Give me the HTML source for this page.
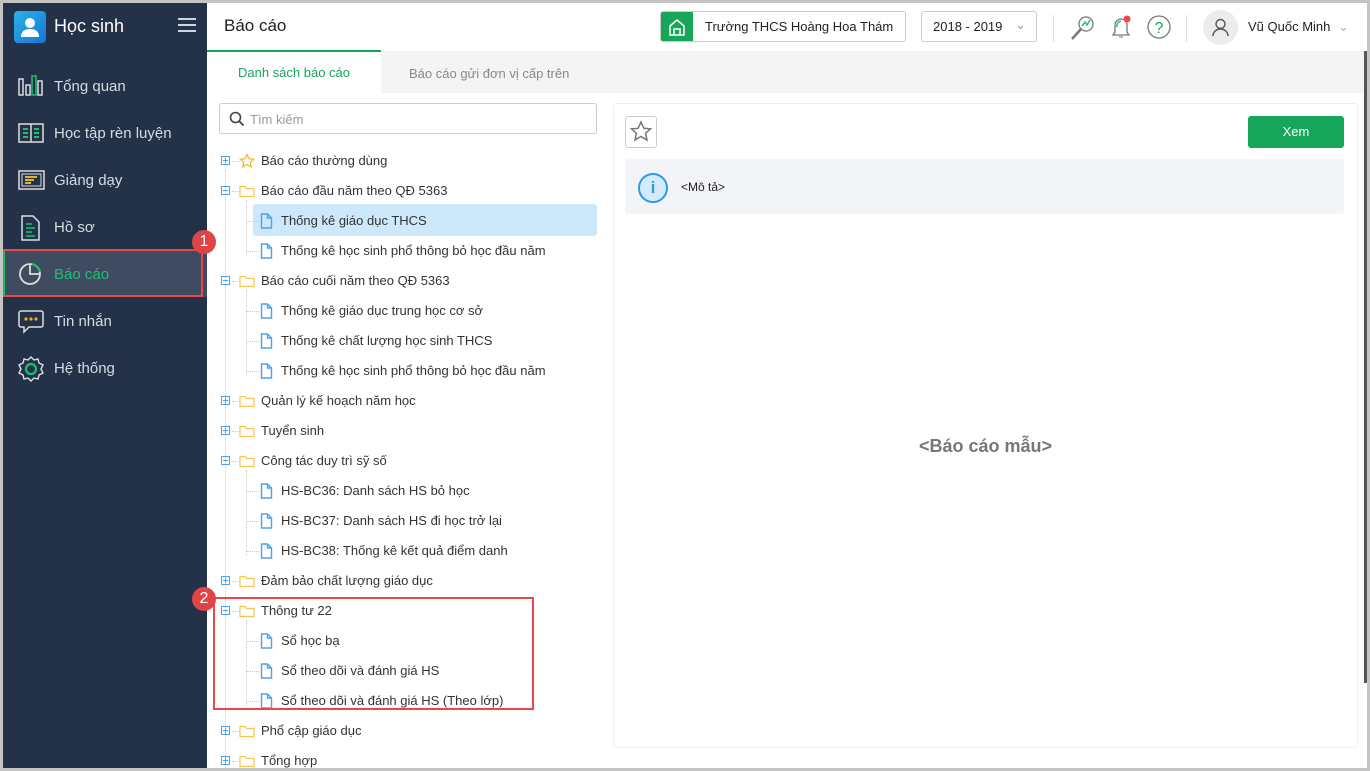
<!DOCTYPE html>
<html><head><meta charset="utf-8"><style>
*{box-sizing:border-box;margin:0;padding:0}
body{width:1370px;height:771px;overflow:hidden;background:#c4c4c4;font-family:"Liberation Sans",sans-serif;position:relative}
.a{position:absolute}
#app{left:3px;top:3px;width:1364px;height:765px;background:#fff;overflow:hidden}
#sb{left:0;top:0;width:204px;height:765px;background:#243249}
.nav{position:absolute;left:0;width:204px;height:47px;color:#d6dbe3;font-size:15px;line-height:49px;padding-left:51px}
.nav svg{position:absolute;left:14px;top:11px}
.tr{position:absolute;height:30px;line-height:30px;font-size:13px;color:#333;white-space:nowrap}
.exp{position:absolute;width:9px;height:9px;border:1px solid #4aa3f0;left:218px}
.exp:before{content:"";position:absolute;left:1px;top:3px;width:5px;height:1px;background:#4aa3f0}
.exp.p:after{content:"";position:absolute;left:3px;top:1px;width:1px;height:5px;background:#4aa3f0}
</style></head><body>
<div id="app" class="a">
<div id="sb" class="a">
 <div class="a" style="left:11px;top:8px;width:32px;height:32px;border-radius:4px;background:linear-gradient(135deg,#2bb0e8,#1477d6)"><svg width="32" height="32"><circle cx="16" cy="12" r="5" fill="#fff"/><path d="M7 26c0-6 4-8 9-8s9 2 9 8z" fill="#fff"/></svg></div>
 <div class="a" style="left:51px;top:13px;color:#fff;font-size:18px">Học sinh</div>
 <div class="a" style="left:175px;top:15px;width:18px;height:2px;background:#cfd5de;box-shadow:0 6px 0 #cfd5de,0 12px 0 #cfd5de"></div>
 <div class="nav" style="top:59px"><svg width="26" height="26"><rect x="2" y="6" width="4" height="16" fill="none" stroke="#ddd" stroke-width="1.5"/><rect x="9" y="12" width="4" height="10" fill="none" stroke="#ddd" stroke-width="1.5"/><rect x="15" y="3" width="4" height="19" fill="none" stroke="#1ec070" stroke-width="1.5"/><rect x="21" y="8" width="4" height="14" fill="none" stroke="#ddd" stroke-width="1.5"/></svg>Tổng quan</div>
 <div class="nav" style="top:106px"><svg width="28" height="26"><rect x="2" y="4" width="24" height="18" fill="none" stroke="#ddd" stroke-width="1.5"/><line x1="14" y1="4" x2="14" y2="22" stroke="#ddd" stroke-width="1.5"/><path d="M6 9h5M6 13h5M6 17h5M17 9h5M17 13h5M17 17h5" stroke="#1ec070" stroke-width="2"/></svg>Học tập rèn luyện</div>
 <div class="nav" style="top:153px"><svg width="28" height="26"><rect x="2" y="4" width="25" height="18" fill="none" stroke="#ddd" stroke-width="1.5"/><rect x="5" y="7" width="19" height="12" fill="none" stroke="#ddd"/><path d="M8 10h12M8 13h9M8 16h6" stroke="#e6b422" stroke-width="2"/></svg>Giảng dạy</div>
 <div class="nav" style="top:200px"><svg width="26" height="28"><path d="M5 2h11l6 6v18H5z" fill="none" stroke="#ddd" stroke-width="1.5"/><path d="M9 10h6M9 14h9M9 18h6M9 22h9" stroke="#1ec070" stroke-width="1.5"/></svg>Hồ sơ</div>
 <div class="nav" style="top:247px;background:#3e4b60;color:#1ec070;border-left:2px solid #1ec070;padding-left:49px"><svg width="26" height="26" style="left:12px"><circle cx="13" cy="13" r="10" fill="none" stroke="#ddd" stroke-width="1.8"/><path d="M13 3v10h10" fill="none" stroke="#ddd" stroke-width="1.8"/><path d="M15 3a10 10 0 0 1 8 8" fill="none" stroke="#1ec070" stroke-width="2"/></svg>Báo cáo</div>
 <div class="nav" style="top:294px"><svg width="28" height="28"><path d="M4 3h20a2 2 0 0 1 2 2v12a2 2 0 0 1-2 2H12l-5 5v-5H4a2 2 0 0 1-2-2V5a2 2 0 0 1 2-2z" fill="none" stroke="#ddd" stroke-width="1.5"/><circle cx="9" cy="11" r="1.6" fill="#e6b422"/><circle cx="14" cy="11" r="1.6" fill="#e6b422"/><circle cx="19" cy="11" r="1.6" fill="#e6b422"/></svg>Tin nhắn</div>
 <div class="nav" style="top:341px"><svg width="28" height="28"><path d="M14 2l3 3 4-1 1 4 4 2-2 4 2 4-4 2-1 4-4-1-3 3-3-3-4 1-1-4-4-2 2-4-2-4 4-2 1-4 4 1z" fill="none" stroke="#ddd" stroke-width="1.4"/><circle cx="14" cy="14" r="5" fill="none" stroke="#1ec070" stroke-width="2.2"/></svg>Hệ thống</div>
</div>
<div class="a" style="left:-1px;top:246px;width:201px;height:48px;border:2px solid #e84848"></div>
<div class="a" style="left:189px;top:227px;width:24px;height:24px;border-radius:50%;background:#e04444;color:#fff;font-size:16px;text-align:center;line-height:24px">1</div>

<!-- header -->
<div class="a" style="left:221px;top:13px;font-size:17px;color:#222">Báo cáo</div>
<div class="a" style="left:657px;top:8px;width:246px;height:31px;border:1px solid #ccc;border-radius:3px;overflow:hidden"><div class="a" style="left:0;top:0;width:32px;height:31px;background:#16a65a"><svg width="32" height="30"><path d="M9 14l7-6 7 6v9H9z M13 23v-6h6v6" fill="none" stroke="#fff" stroke-width="1.5"/></svg></div><div class="a" style="left:44px;top:7px;font-size:13px;color:#222">Trường THCS Hoàng Hoa Thám</div></div>
<div class="a" style="left:918px;top:8px;width:116px;height:31px;border:1px solid #ccc;border-radius:3px;font-size:13px;color:#222;padding:7px 11px">2018 - 2019 <span style="color:#999;position:absolute;right:10px;top:5px">⌄</span></div>
<div class="a" style="left:1050px;top:12px;width:1px;height:27px;background:#ddd"></div>
<svg class="a" style="left:1066px;top:10px" width="28" height="30"><circle cx="17" cy="11" r="7" fill="none" stroke="#777" stroke-width="1.3"/><path d="M12 16l-9 10" stroke="#777" stroke-width="2.5"/><path d="M13 13l3-4 2 3 3-5" fill="none" stroke="#1ec070" stroke-width="1.5"/></svg>
<svg class="a" style="left:1104px;top:8px" width="28" height="32"><path d="M6 24h16l-2-3v-7a6 6 0 0 0-12 0v7z" fill="none" stroke="#777" stroke-width="1.3"/><path d="M12 26h4" stroke="#777"/><path d="M10 16a5 5 0 0 1 4-6" fill="none" stroke="#1ec070" stroke-width="1.4"/><circle cx="20" cy="8" r="3.5" fill="#f04848"/></svg>
<svg class="a" style="left:1142px;top:10px" width="28" height="28"><circle cx="14" cy="14" r="11" fill="none" stroke="#777" stroke-width="1.3"/><text x="14" y="20" text-anchor="middle" font-size="16" fill="#16a65a" font-family="Liberation Sans">?</text></svg>
<div class="a" style="left:1183px;top:12px;width:1px;height:27px;background:#ddd"></div>
<div class="a" style="left:1200px;top:7px;width:35px;height:35px;border-radius:50%;background:#ececec"><svg width="35" height="35"><circle cx="17.5" cy="14" r="4.5" fill="none" stroke="#555" stroke-width="1.4"/><path d="M10 26a7.5 7 0 0 1 15 0" fill="none" stroke="#555" stroke-width="1.4"/></svg></div>
<div class="a" style="left:1245px;top:16px;font-size:13px;color:#222">Vũ Quốc Minh <span style="color:#aaa;margin-left:4px">⌄</span></div>

<!-- tabs -->
<div class="a" style="left:204px;top:48px;width:1158px;height:42px;background:#f4f4f4"></div>
<div class="a" style="left:204px;top:47px;width:174px;height:43px;background:#fff;border-top:2px solid #16a65a;color:#16a65a;font-size:13px;text-align:center;line-height:42px">Danh sách báo cáo</div>
<div class="a" style="left:406px;top:63px;font-size:13px;color:#888">Báo cáo gửi đơn vị cấp trên</div>
<div class="a" style="left:1361px;top:48px;width:3px;height:632px;background:#555"></div>

<!-- search -->
<div class="a" style="left:216px;top:100px;width:378px;height:31px;border:1px solid #ccc;border-radius:3px"><svg class="a" style="left:9px;top:7px" width="16" height="16"><circle cx="6.5" cy="6.5" r="5" fill="none" stroke="#444" stroke-width="1.6"/><path d="M10 10l4.5 4.5" stroke="#444" stroke-width="1.8"/></svg><div class="a" style="left:30px;top:8px;font-size:13px;color:#999">Tìm kiếm</div></div>

<!-- tree lines -->
<div class="a" style="left:222px;top:167px;width:0;height:600px;border-left:1px dotted #ccc"></div>
<div class="a" style="left:243px;top:197px;height:56px;border-left:1px dotted #ccc"></div>
<div class="a" style="left:243px;top:287px;height:86px;border-left:1px dotted #ccc"></div>
<div class="a" style="left:243px;top:467px;height:86px;border-left:1px dotted #ccc"></div>
<div class="a" style="left:243px;top:617px;height:86px;border-left:1px dotted #ccc"></div>
<div class="a" style="left:250px;top:201px;width:344px;height:32px;background:#cde8fa;border-radius:3px"></div>
<div id="tree"></div>

<div class="a" style="left:210px;top:594px;width:321px;height:113px;border:2px solid #e84848"></div>
<div class="a" style="left:189px;top:584px;width:24px;height:24px;border-radius:50%;background:#e04444;color:#fff;font-size:16px;text-align:center;line-height:24px">2</div>

<!-- right panel -->
<div class="a" style="left:610px;top:100px;width:745px;height:645px;border:1px solid #eceef3;border-radius:3px"></div>
<div class="a" style="left:622px;top:113px;width:32px;height:32px;border:1px solid #ccc;border-radius:3px"><svg width="30" height="30"><path d="M15 5l2.9 6.3 6.6.6-5 4.5 1.5 6.6L15 19.5 9 23l1.5-6.6-5-4.5 6.6-.6z" fill="none" stroke="#777" stroke-width="1.5"/></svg></div>
<div class="a" style="left:1245px;top:113px;width:96px;height:32px;background:#16a65a;border-radius:3px;color:#fff;font-size:13px;text-align:center;line-height:32px">Xem</div>
<div class="a" style="left:622px;top:156px;width:719px;height:55px;background:#f3f4f8;border-radius:3px"><div class="a" style="left:13px;top:14px;width:30px;height:30px;border-radius:50%;border:2px solid #2a9be8;background:#d4ebfb;color:#2a9be8;font-weight:bold;font-size:17px;text-align:center;line-height:26px">i</div><div class="a" style="left:56px;top:21px;font-size:12px;color:#222">&lt;Mô tả&gt;</div></div>
<div class="a" style="left:610px;top:433px;width:745px;text-align:center;font-size:18px;font-weight:bold;color:#777">&lt;Báo cáo mẫu&gt;</div>
</div>
<script>
var rows=[[0,'s','Báo cáo thường dùng','p'],[0,'f','Báo cáo đầu năm theo QĐ 5363','m'],[1,'d','Thống kê giáo dục THCS'],[1,'d','Thống kê học sinh phổ thông bỏ học đầu năm'],[0,'f','Báo cáo cuối năm theo QĐ 5363','m'],[1,'d','Thống kê giáo dục trung học cơ sở'],[1,'d','Thống kê chất lượng học sinh THCS'],[1,'d','Thống kê học sinh phổ thông bỏ học đầu năm'],[0,'f','Quản lý kế hoạch năm học','p'],[0,'f','Tuyển sinh','p'],[0,'f','Công tác duy trì sỹ số','m'],[1,'d','HS-BC36: Danh sách HS bỏ học'],[1,'d','HS-BC37: Danh sách HS đi học trở lại'],[1,'d','HS-BC38: Thống kê kết quả điểm danh'],[0,'f','Đảm bảo chất lượng giáo dục','p'],[0,'f','Thông tư 22','m'],[1,'d','Sổ học bạ'],[1,'d','Sổ theo dõi và đánh giá HS'],[1,'d','Sổ theo dõi và đánh giá HS (Theo lớp)'],[0,'f','Phổ cập giáo dục','p'],[0,'f','Tổng hợp','p']];
var h='';rows.forEach(function(r,i){var cy=157+i*30;var t=cy-14;
if(r[0]==0){h+='<div class="exp '+(r[3]=='p'?'p':'')+'" style="top:'+(cy-4)+'px"></div>';
h+='<div class="a" style="left:229px;top:'+(cy+1)+'px;width:8px;border-top:1px dotted #ccc"></div>';
if(r[1]=='s')h+='<svg class="a" style="left:236px;top:'+(cy-7)+'px" width="16" height="16"><path d="M8 1.5l2 4.3 4.6.5-3.4 3.1 1 4.6L8 11.6 3.8 14l1-4.6L1.4 6.3l4.6-.5z" fill="none" stroke="#f5b82e" stroke-width="1.3"/></svg>';
else h+='<svg class="a" style="left:236px;top:'+(cy-6)+'px" width="16" height="14"><path d="M1 2.5h5l1.5 2H15v8H1z" fill="none" stroke="#f5c451" stroke-width="1.2"/></svg>';
h+='<div class="tr" style="left:258px;top:'+t+'px">'+r[2]+'</div>';}
else{h+='<div class="a" style="left:244px;top:'+(cy+1)+'px;width:12px;border-top:1px dotted #ccc"></div>';
h+='<svg class="a" style="left:257px;top:'+(cy-7)+'px" width="13" height="16"><path d="M1.5 1h6l4 4v10h-10z M7.5 1v4h4" fill="none" stroke="#4aa3f0" stroke-width="1.4"/></svg>';
h+='<div class="tr" style="left:278px;top:'+t+'px">'+r[2]+'</div>';}});
document.getElementById('tree').innerHTML=h;
</script>
</body></html>
